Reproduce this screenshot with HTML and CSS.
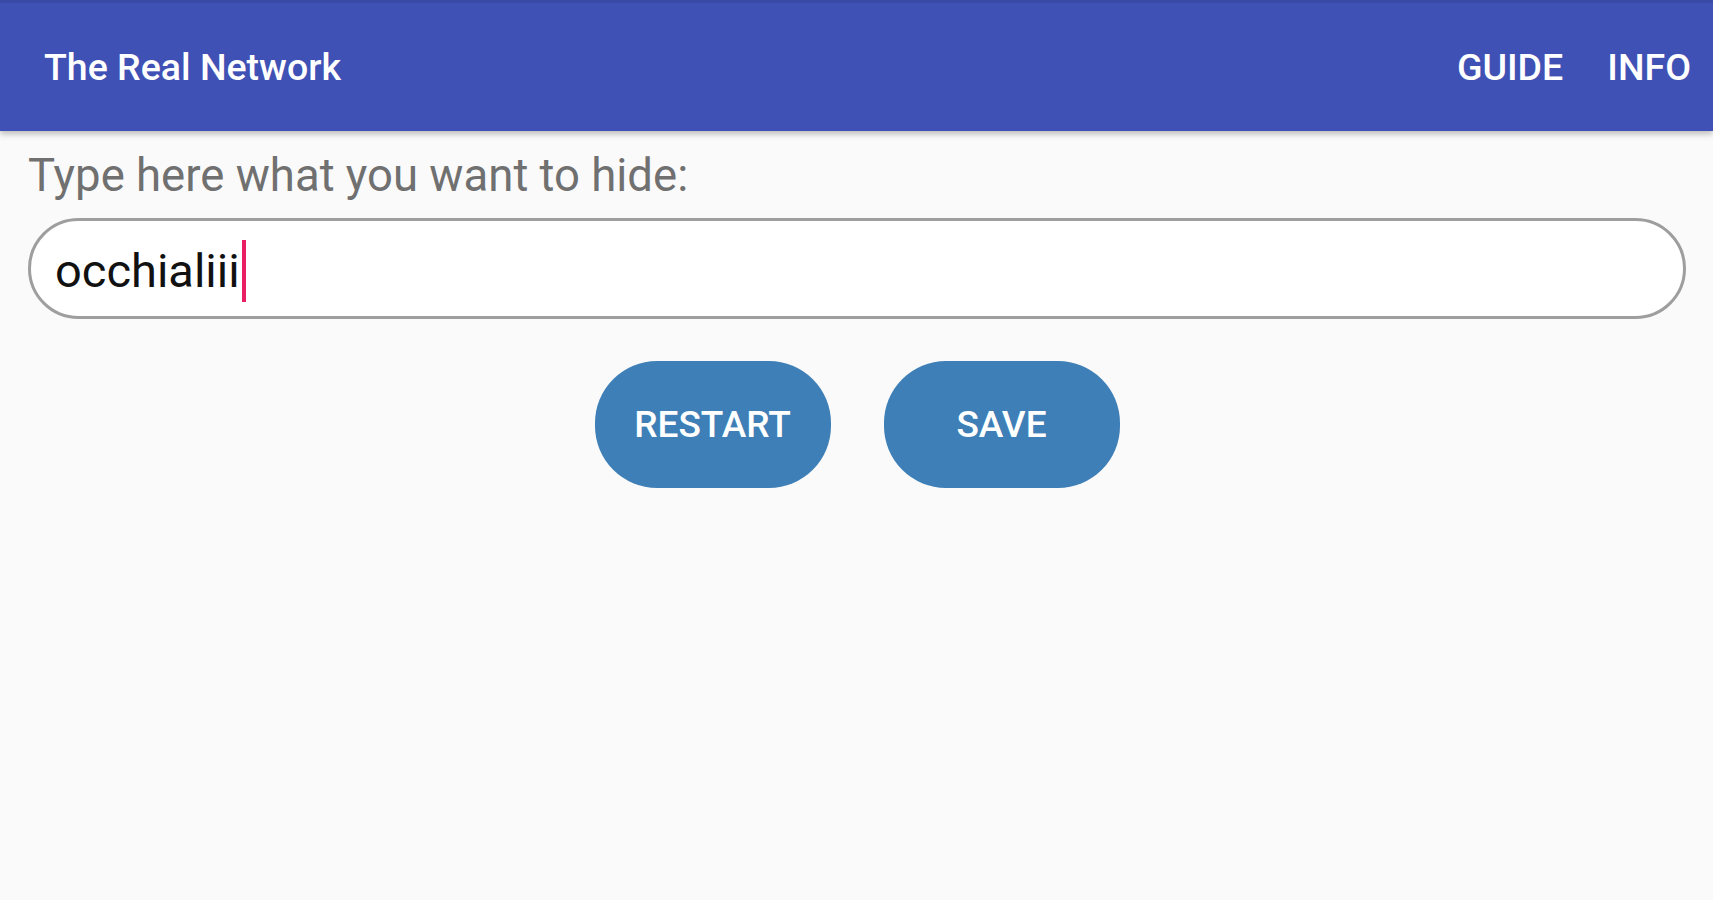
FILE: index.html
```html
<!DOCTYPE html>
<html>
<head>
<meta charset="utf-8">
<link rel="stylesheet" href="styles.css">
</head>
<body>
<header class="appbar">
  <div class="title">The Real Network</div>
  <nav class="actions">
    <span class="action">GUIDE</span>
    <span class="action">INFO</span>
  </nav>
</header>
<main class="content">
  <div class="label">Type here what you want to hide:</div>
  <div class="field"><span class="value">occhialiii</span><span class="caret"></span></div>
  <div class="buttons">
    <button class="btn">RESTART</button>
    <button class="btn">SAVE</button>
  </div>
</main>
</body>
</html>
```
FILE: styles.css
```css
html, body {
  margin: 0;
  padding: 0;
  background: #fafafa;
  font-family: Roboto, "Liberation Sans", sans-serif;
}
.appbar {
  height: 131px;
  background: #3f51b5;
  border-top: 3px solid #3949a6;
  box-sizing: border-box;
  display: flex;
  align-items: center;
  justify-content: space-between;
  padding: 0 22px 0 44px;
  box-shadow: 0 3px 6px rgba(0,0,0,0.25);
  color: #fff;
  position: relative;
}
.title {
  font-size: 37.5px;
  font-weight: 500;
}
.actions {
  display: flex;
  gap: 44px;
}
.action {
  font-size: 37.5px;
  font-weight: 500;
}
.content {
  padding: 17px 27px 0 28px;
}
.label {
  font-size: 45.5px;
  color: #707070;
  line-height: 56px;
}
.field {
  margin-top: 14px;
  height: 101px;
  box-sizing: border-box;
  border: 3px solid #9e9e9e;
  border-radius: 51px;
  background: #fff;
  display: flex;
  align-items: center;
  padding-left: 24px;
  padding-top: 4px;
}
.value {
  font-size: 47px;
  color: #111;
}
.caret {
  width: 4px;
  height: 62px;
  background: #e91e63;
  margin-left: 2px;
}
.buttons {
  display: flex;
  justify-content: center;
  gap: 53px;
  margin-top: 42px;
}
.btn {
  width: 236px;
  height: 127px;
  border: none;
  border-radius: 62px;
  background: #3d7fb6;
  color: #fff;
  font-family: Roboto, "Liberation Sans", sans-serif;
  font-size: 37px;
  font-weight: 500;
  padding: 0;
}
```
